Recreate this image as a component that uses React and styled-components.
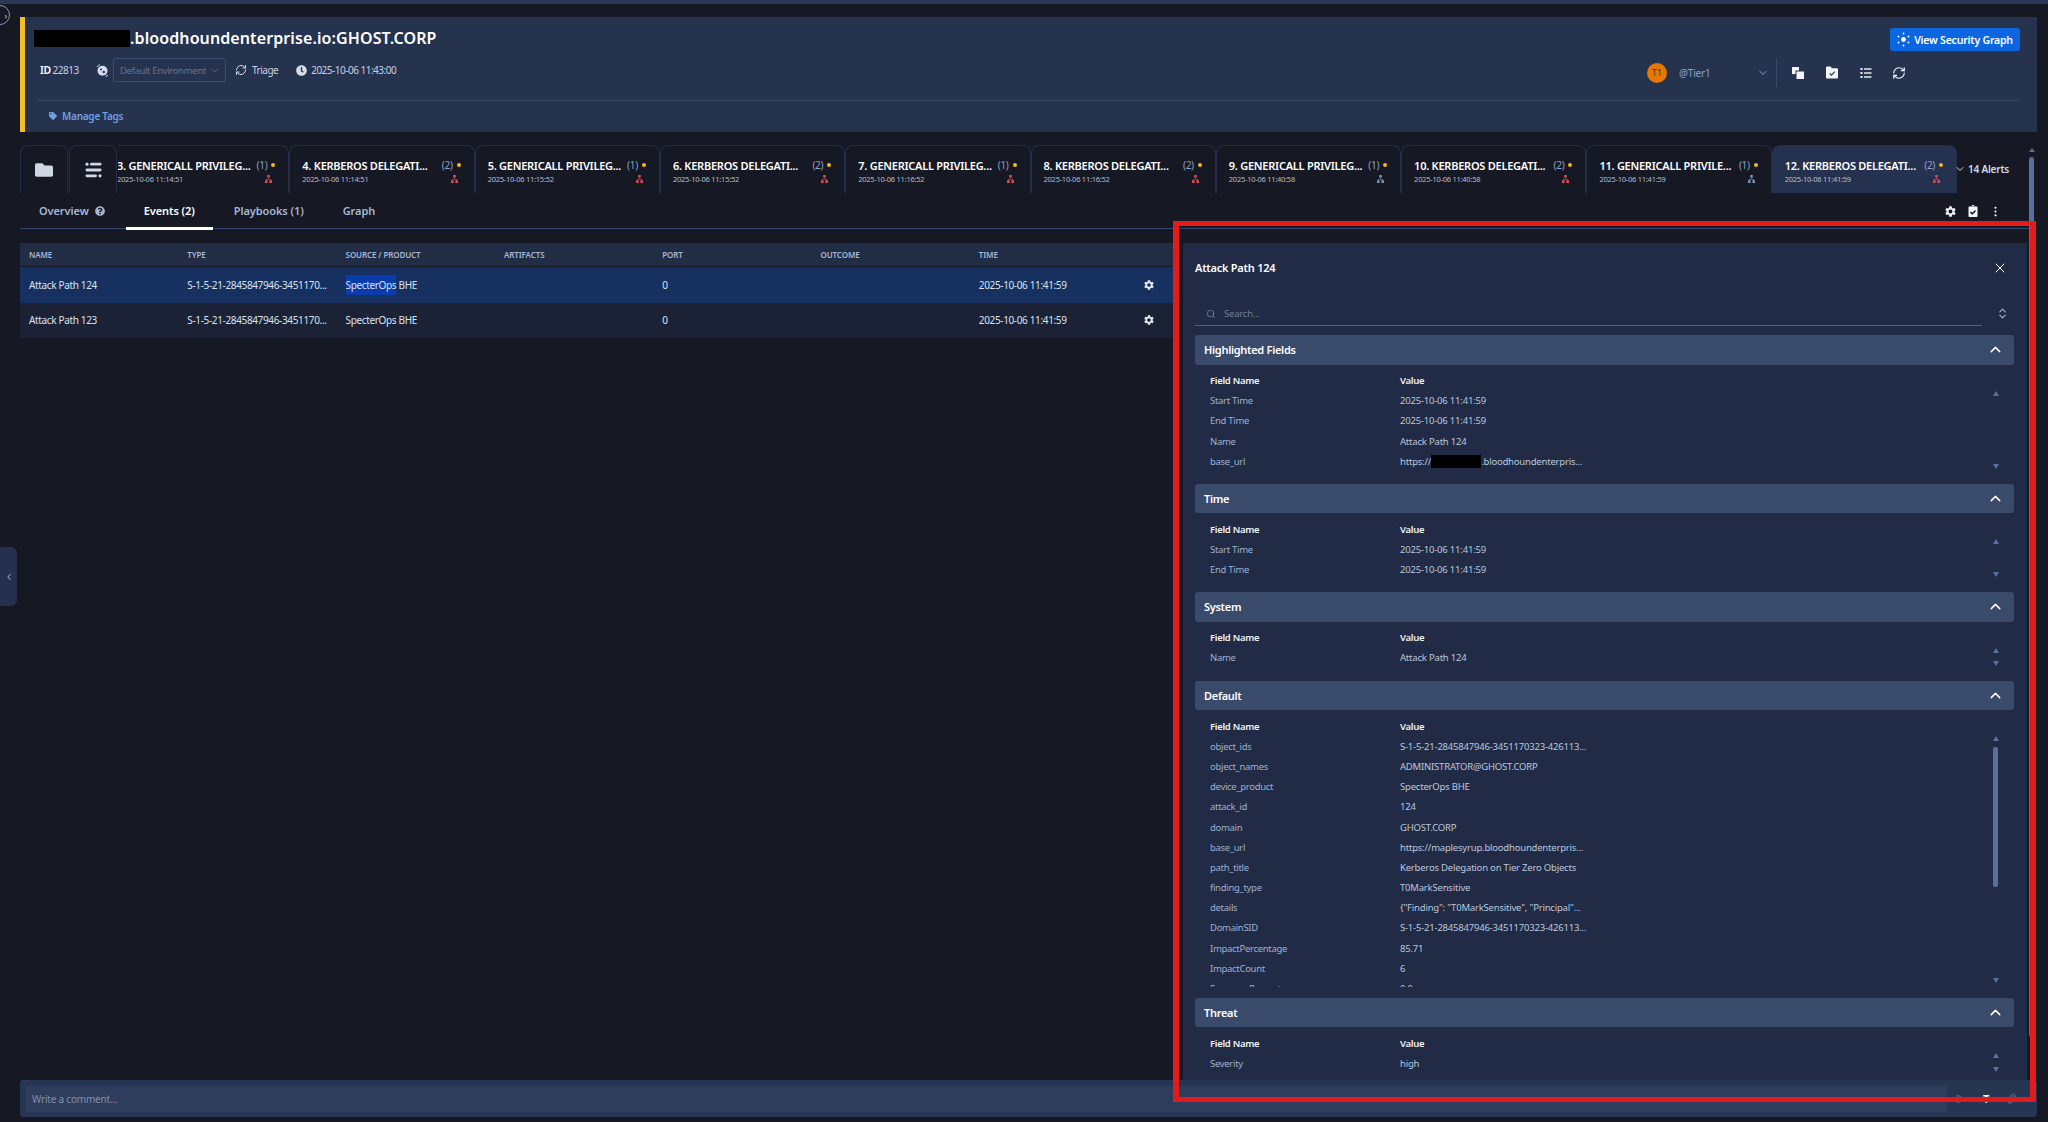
import React from 'react';
import styled, { createGlobalStyle } from 'styled-components';
import { ChevronDown, ChevronLeft, ChevronUp, ChevronsUpDown, RefreshCw, Search, X, EllipsisVertical, SendHorizontal, Paperclip } from 'lucide-react';
import { FaClock, FaTag, FaQuestionCircle, FaClipboardCheck, FaFolder } from 'react-icons/fa';
import { MdSettings } from 'react-icons/md';

const GlobalStyle = createGlobalStyle`
    html, body {
        margin: 0;
        padding: 0;
        height: 100%;
        background: #161824;
        overflow: hidden;
    }
    * {
        box-sizing: border-box;
    }
    body {
        font-family: "Noto Sans", "Open Sans", sans-serif;
        color: #d5dded;
    }
`;

const Page = styled.div`
    position: relative;
    width: 2048px;
    height: 1122px;
    display: flex;
    flex-direction: column;
    overflow: hidden;
`;

const TopStrip = styled.div`
    height: 4px;
    flex: none;
    background: #2a3855;
`;

const CollapseBadge = styled.div`
    position: absolute;
    left: -10px;
    top: 5px;
    width: 20px;
    height: 20px;
    border-radius: 50%;
    border: 1px solid #8d9bb8;
    background: #161824;
    color: #d5dded;
    display: flex;
    align-items: center;
    justify-content: flex-end;
    font-size: 8px;
    padding-right: 2px;
`;

const SideHandle = styled.div`
    position: absolute;
    left: 0;
    top: 547px;
    width: 17px;
    height: 59px;
    background: #24304d;
    border-radius: 0 6px 6px 0;
    color: #d5dded;
    display: flex;
    align-items: center;
    justify-content: center;
`;

const PageScrollArrow = styled.div`
    position: absolute;
    left: 2029px;
    top: 148px;
    width: 0;
    height: 0;
    border-left: 3px solid transparent;
    border-right: 3px solid transparent;
    border-bottom: 4px solid #5b6f9e;
`;

const PageScrollThumb = styled.div`
    position: absolute;
    left: 2029px;
    top: 157px;
    width: 5px;
    height: 880px;
    border-radius: 3px;
    background: #5b6f9e;
`;

const RedFrame = styled.div`
    position: absolute;
    left: 1173px;
    top: 221px;
    width: 863px;
    height: 881px;
    border: solid #e21c1c;
    border-width: 5px 6px;
    pointer-events: none;
`;

const Header = styled.header`
    flex: none;
    height: 115px;
    margin: 13px 11px 0 20px;
    background: #26334f;
    border-left: 5px solid #f5bd2a;
`;

const HeaderMain = styled.div`
    height: 84px;
    margin: 0 17px 0 12px;
    border-bottom: 1px solid #36445f;
    display: flex;
    justify-content: space-between;
`;

const HeaderLeft = styled.div`
    display: flex;
    flex-direction: column;
`;

const Title = styled.h1`
    margin: 11px 0 0 -3px;
    height: 21px;
    display: flex;
    align-items: center;
    font-size: 16px;
    line-height: 21px;
    font-weight: 600;
    color: #fff;
    letter-spacing: 0.1px;
`;

const Redacted = styled.span`
    display: inline-block;
    flex: none;
    width: ${(p) => p.$width}px;
    height: ${(p) => p.$height}px;
    background: #000;
`;

const MetaRow = styled.div`
    margin: 9px 0 0 3px;
    height: 24px;
    display: flex;
    align-items: center;
    font-size: 10px;
    color: #c6d0e2;
    white-space: nowrap;
`;

const MetaId = styled.span`
    width: 56px;
    letter-spacing: -0.5px;
    b {
        font-size: 10.5px;
        font-weight: 600;
        color: #fff;
        margin-right: 2px;
    }
`;

const MetaIcon = styled.span`
    width: ${(p) => p.$width || 13}px;
    flex: none;
    display: flex;
    align-items: center;
    color: #d5dded;
`;

const EnvSelect = styled.div`
    width: 113px;
    height: 24px;
    border: 1px solid #3d4d70;
    border-radius: 2px;
    padding: 0 5px 0 6px;
    display: flex;
    align-items: center;
    justify-content: space-between;
    color: #64738f;
    font-size: 9.5px;
    letter-spacing: -0.35px;
    margin-right: 9px;
`;

const MetaText = styled.span`
    letter-spacing: -0.5px;
    margin-right: ${(p) => p.$gap || 0}px;
`;

const HeaderRight = styled.div`
    display: flex;
    flex-direction: column;
    align-items: flex-end;
`;

const GraphButton = styled.button`
    margin-top: 11px;
    width: 130px;
    height: 23px;
    border: 0;
    border-radius: 3px;
    background: #0b66e0;
    color: #fff;
    font-family: inherit;
    font-size: 10.5px;
    font-weight: 600;
    letter-spacing: -0.2px;
    display: flex;
    align-items: center;
    justify-content: center;
    gap: 4px;
    padding: 0;
`;

const ActionRow = styled.div`
    margin: 7px 113px 0 0;
    height: 29px;
    display: flex;
    align-items: center;
`;

const Avatar = styled.div`
    width: 20px;
    height: 20px;
    border-radius: 50%;
    background: #e67700;
    color: #5a3300;
    font-size: 9px;
    display: flex;
    align-items: center;
    justify-content: center;
    margin-right: 12px;
`;

const Assignee = styled.div`
    width: 90px;
    margin-right: 7px;
    display: flex;
    align-items: center;
    justify-content: space-between;
    font-size: 10px;
    letter-spacing: -0.2px;
    color: #8fa3c6;
`;

const ActionDivider = styled.div`
    width: 1px;
    height: 29px;
    background: #3a4966;
    margin-right: 13px;
`;

const ActionIcon = styled.span`
    width: 16px;
    height: 16px;
    display: flex;
    align-items: center;
    justify-content: center;
    color: #f3f5f9;
    margin-left: ${(p) => p.$gap || 0}px;
`;

const ManageTags = styled.div`
    height: 30px;
    padding-left: 24px;
    display: flex;
    align-items: center;
    gap: 5px;
    font-size: 10px;
    font-weight: 600;
    letter-spacing: -0.25px;
    color: #6f9fe0;
`;

const TabRow = styled.div`
    flex: none;
    height: 48px;
    margin: 13px 0 0 20px;
    display: flex;
`;

const IconTab = styled.div`
    width: 48px;
    flex: none;
    margin-right: 1px;
    border: 1px solid #232e4a;
    border-bottom: 0;
    border-radius: 8px 8px 0 0;
    color: #cfd6e4;
    display: flex;
    align-items: center;
    justify-content: center;
`;

const TabScroller = styled.div`
    width: 1839px;
    flex: none;
    display: flex;
    justify-content: flex-end;
    overflow: hidden;
`;

const AlertTab = styled.div`
    width: 185.3px;
    flex: none;
    padding: 12px 13px 0 12px;
    border: 1px solid #232e4a;
    border-bottom: 0;
    border-radius: 8px 8px 0 0;
    background: ${(p) => (p.$active ? '#24314f' : 'transparent')};
`;

const TabLine = styled.div`
    height: 14px;
    display: flex;
    align-items: center;
`;

const TabTitle = styled.span`
    flex: 1;
    white-space: nowrap;
    font-size: 11px;
    font-weight: 600;
    letter-spacing: -0.25px;
    color: #fff;
`;

const TabCount = styled.span`
    font-size: 10px;
    letter-spacing: -0.3px;
    color: #8fa3c6;
    margin-right: 4px;
`;

const Dot = styled.span`
    width: 4px;
    height: 4px;
    border-radius: 50%;
    background: #f6b90e;
`;

const TabDate = styled.span`
    flex: 1;
    font-size: 7.5px;
    letter-spacing: -0.25px;
    color: #b4bfd3;
    white-space: nowrap;
`;

const TabSeverity = styled.span`
    display: flex;
    margin-right: 3px;
    color: ${(p) => (p.$tone === 'red' ? '#df4a50' : '#7c92b5')};
`;

const AlertsTotal = styled.div`
    display: flex;
    align-items: center;
    gap: 2px;
    margin-left: -3px;
    margin-top: 16px;
    height: 16px;
    font-size: 10px;
    font-weight: 600;
    letter-spacing: -0.2px;
    color: #d5dded;
    white-space: nowrap;
`;

const MainTabs = styled.nav`
    flex: none;
    height: 36px;
    margin: 0 11px 0 20px;
    padding-left: 1px;
    border-bottom: 1px solid #35456b;
    display: flex;
    align-items: flex-start;
    gap: 3px;
`;

const MainTab = styled.div`
    height: 37px;
    padding: 9px 18px 0;
    font-size: 11px;
    line-height: 18px;
    font-weight: 600;
    letter-spacing: -0.08px;
    color: ${(p) => (p.$active ? '#fff' : '#a7b7d3')};
    border-bottom: 3px solid ${(p) => (p.$active ? '#fff' : 'transparent')};
    display: flex;
    gap: 6px;
`;

const HelpIcon = styled.span`
    display: flex;
    align-items: center;
    height: 18px;
    color: #a7b7d3;
`;

const TabTools = styled.div`
    margin: 9px 0 0 auto;
    height: 18px;
    display: flex;
    align-items: center;
    gap: 10px;
    padding-right: 35px;
    color: #f3f5f9;
`;

const Body = styled.main`
    flex: 1;
    min-height: 0;
    display: flex;
    align-items: stretch;
    padding: 14px 0 0 20px;
`;

const EventsTable = styled.section`
    width: 1159px;
    flex: none;
`;

const Grid = styled.div`
    display: grid;
    grid-template-columns: repeat(6, 158.3px) 164px 1fr;
    align-items: center;
    padding-left: 9px;
`;

const TableHead = styled(Grid)`
    height: 23px;
    margin-bottom: 1px;
    background: #212c45;
    font-size: 8px;
    font-weight: 600;
    letter-spacing: -0.1px;
    color: #a7b7d3;
`;

const TableRow = styled(Grid)`
    height: 35.5px;
    font-size: 10px;
    letter-spacing: -0.35px;
    color: #dbe2ef;
    background: ${(p) => (p.$selected ? '#163160' : '#1b2236')};
`;

const Selected = styled.span`
    display: inline-block;
    height: 20px;
    line-height: 20px;
    background: #0a3cab;
`;

const RowGear = styled.span`
    display: flex;
    color: #e4e9f2;
`;

const DetailPanel = styled.aside`
    width: 844px;
    flex: none;
    margin-left: 4px;
    padding: 0 13px 0 12px;
    background: #212b45;
    overflow: hidden;
`;

const PanelTitleRow = styled.div`
    height: 49px;
    margin-bottom: 1px;
    display: flex;
    align-items: center;
    justify-content: space-between;
    padding-right: 6px;
    font-size: 11px;
    font-weight: 600;
    letter-spacing: -0.25px;
    color: #fff;
`;

const SearchRow = styled.div`
    height: 33px;
    margin-bottom: 9px;
    display: flex;
    align-items: flex-end;
    justify-content: space-between;
`;

const SearchBox = styled.div`
    width: 787px;
    height: 26px;
    border-bottom: 1px solid #50628a;
    padding: 2px 0 0 11px;
    display: flex;
    align-items: center;
    gap: 8px;
    font-size: 9.5px;
    letter-spacing: -0.2px;
    color: #6e7f9e;
`;

const SortToggle = styled.span`
    display: flex;
    height: 26px;
    align-items: center;
    margin-right: 5px;
    color: #a7b7d3;
`;

const SectionBar = styled.div`
    height: 29.5px;
    padding: 0 10px 0 9px;
    border-radius: 3px;
    background: #3a4a6b;
    color: #fff;
    display: flex;
    align-items: center;
    justify-content: space-between;
    font-size: 11px;
    font-weight: 600;
    letter-spacing: -0.3px;
`;

const SectionBody = styled.div`
    display: flex;
    height: ${(p) => p.$height}px;
    padding: 6px 0 11px 15px;
`;

const FieldRows = styled.div`
    flex: 1;
    min-width: 0;
    overflow: hidden;
`;

const FieldRow = styled.div`
    height: 20.2px;
    display: grid;
    grid-template-columns: 190px 1fr;
    align-items: center;
    font-size: 9.5px;
    letter-spacing: -0.3px;
    color: #9fb0cf;
    white-space: nowrap;
`;

const HeadRow = styled(FieldRow)`
    font-weight: 600;
    color: #eef2f8;
`;

const FieldValue = styled.span`
    display: flex;
    align-items: center;
    letter-spacing: -0.2px;
    color: #bcc8df;
`;

const ScrollTrack = styled.div`
    width: 5px;
    margin: 20px 16px 4px 0;
    display: flex;
    flex-direction: column;
    align-items: center;
    justify-content: space-between;
`;

const ScrollUp = styled.i`
    border-left: 3px solid transparent;
    border-right: 3px solid transparent;
    border-bottom: 5px solid #5b6f9e;
`;

const ScrollDown = styled.i`
    border-left: 3px solid transparent;
    border-right: 3px solid transparent;
    border-top: 5px solid #5b6f9e;
`;

const ScrollThumb = styled.i`
    width: 5px;
    height: 140px;
    margin-bottom: auto;
    margin-top: 6px;
    border-radius: 2px;
    background: #5b6f9e;
`;

const CommentBar = styled.footer`
    position: relative;
    flex: none;
    height: 37px;
    margin: 0 11px 5px 20px;
    padding: 5px 0 5px 6px;
    background: #263552;
    border-radius: 3px;
    display: flex;
    align-items: center;
`;

const CommentInput = styled.div`
    width: 1921px;
    height: 26px;
    padding-left: 6px;
    background: #2f3d5c;
    display: flex;
    align-items: center;
    font-size: 10px;
    letter-spacing: -0.2px;
    color: #8090ad;
`;

const CommentTools = styled.div`
    flex: 1;
    display: flex;
    align-items: center;
    gap: 17px;
    padding-left: 9px;
    color: #6c7d9c;
`;

const ToolLetter = styled.span`
    font-size: 11px;
    font-weight: 700;
    color: #f3f5f9;
`;

const tabs = [
    { title: '3. GENERICALL PRIVILEG...', count: 1, date: '2025-10-06 11:14:51', tone: 'red' },
    { title: '4. KERBEROS DELEGATI...', count: 2, date: '2025-10-06 11:14:51', tone: 'red' },
    { title: '5. GENERICALL PRIVILEG...', count: 1, date: '2025-10-06 11:15:52', tone: 'red' },
    { title: '6. KERBEROS DELEGATI...', count: 2, date: '2025-10-06 11:15:52', tone: 'red' },
    { title: '7. GENERICALL PRIVILEG...', count: 1, date: '2025-10-06 11:16:52', tone: 'red' },
    { title: '8. KERBEROS DELEGATI...', count: 2, date: '2025-10-06 11:16:52', tone: 'red' },
    { title: '9. GENERICALL PRIVILEG...', count: 1, date: '2025-10-06 11:40:58', tone: 'blue' },
    { title: '10. KERBEROS DELEGATI...', count: 2, date: '2025-10-06 11:40:58', tone: 'red' },
    { title: '11. GENERICALL PRIVILE...', count: 1, date: '2025-10-06 11:41:59', tone: 'blue' },
    { title: '12. KERBEROS DELEGATI...', count: 2, date: '2025-10-06 11:41:59', tone: 'red', active: true },
];

const events = [
    { name: 'Attack Path 124', selected: true },
    { name: 'Attack Path 123' },
];

const columns = ['NAME', 'TYPE', 'SOURCE / PRODUCT', 'ARTIFACTS', 'PORT', 'OUTCOME', 'TIME'];

const sections = [
    {
        title: 'Highlighted Fields',
        height: 119,
        rows: [
            ['Start Time', '2025-10-06 11:41:59'],
            ['End Time', '2025-10-06 11:41:59'],
            ['Name', 'Attack Path 124'],
            ['base_url', 'redacted'],
        ],
    },
    {
        title: 'Time',
        height: 79,
        rows: [
            ['Start Time', '2025-10-06 11:41:59'],
            ['End Time', '2025-10-06 11:41:59'],
        ],
    },
    {
        title: 'System',
        height: 59,
        rows: [['Name', 'Attack Path 124']],
    },
    {
        title: 'Default',
        height: 287.5,
        thumb: true,
        rows: [
            ['object_ids', 'S-1-5-21-2845847946-3451170323-426113...'],
            ['object_names', 'ADMINISTRATOR@GHOST.CORP'],
            ['device_product', 'SpecterOps BHE'],
            ['attack_id', '124'],
            ['domain', 'GHOST.CORP'],
            ['base_url', 'https://maplesyrup.bloodhoundenterpris...'],
            ['path_title', 'Kerberos Delegation on Tier Zero Objects'],
            ['finding_type', 'T0MarkSensitive'],
            ['details', '{"Finding": "T0MarkSensitive", "Principal"...'],
            ['DomainSID', 'S-1-5-21-2845847946-3451170323-426113...'],
            ['ImpactPercentage', '85.71'],
            ['ImpactCount', '6'],
            ['ExposurePercent', '0.0'],
        ],
    },
    {
        title: 'Threat',
        height: 60,
        rows: [['Severity', 'high']],
    },
];

function EnvIcon() {
    return (
        <svg width="13" height="13" viewBox="0 0 13 13" fill="currentColor">
            <circle cx="6.5" cy="6.8" r="5" />
            <circle cx="5" cy="5.6" r="1" fill="#26334f" />
            <circle cx="7.8" cy="8" r="1.2" fill="#26334f" />
            <path d="M1 3 A6.5 6.5 0 0 1 4 0.6 M12 11 A6.5 6.5 0 0 1 9.5 12.6" stroke="currentColor" fill="none" />
        </svg>
    );
}

function ClusterIcon() {
    return (
        <svg width="13" height="15" viewBox="0 0 13 15" fill="#fff">
            <circle cx="6.5" cy="7.5" r="2.4" />
            <circle cx="6.5" cy="1.5" r="0.9" />
            <circle cx="6.5" cy="13.5" r="0.9" />
            <circle cx="1.5" cy="4.5" r="0.9" />
            <circle cx="11.5" cy="4.5" r="0.9" />
            <circle cx="1.5" cy="10.5" r="0.9" />
            <circle cx="11.5" cy="10.5" r="0.9" />
        </svg>
    );
}

function CopyIcon() {
    return (
        <svg width="14" height="14" viewBox="0 0 14 14" fill="currentColor">
            <path d="M1 1.5 A0.5 0.5 0 0 1 1.5 1 H8 V4.5 H4.5 V8 H1 Z" />
            <path d="M5.5 5.5 H13 V13 H5.5 Z" />
        </svg>
    );
}

function FolderCheckIcon() {
    return (
        <svg width="14" height="13" viewBox="0 0 14 13">
            <path d="M1 1.5 A1 1 0 0 1 2 0.5 H5.5 L7 2.2 H12 A1 1 0 0 1 13 3.2 V11.5 A1 1 0 0 1 12 12.5 H2 A1 1 0 0 1 1 11.5 Z" fill="currentColor" />
            <path d="M4.6 7.4 L6.4 9.2 L9.8 5.6" stroke="#26334f" strokeWidth="1.2" fill="none" />
        </svg>
    );
}

function DotListIcon() {
    return (
        <svg width="12" height="12" viewBox="0 0 12 12" fill="currentColor">
            <rect x="0.5" y="1" width="2" height="2" />
            <rect x="4" y="1.3" width="7.5" height="1.4" />
            <rect x="0.5" y="5" width="2" height="2" />
            <rect x="4" y="5.3" width="7.5" height="1.4" />
            <rect x="0.5" y="9" width="2" height="2" />
            <rect x="4" y="9.3" width="7.5" height="1.4" />
        </svg>
    );
}

function QueueIcon() {
    return (
        <svg width="17" height="16" viewBox="0 0 17 16" fill="currentColor">
            <circle cx="2" cy="2.2" r="1.6" />
            <rect x="5" y="0.8" width="11.5" height="2.8" rx="1.4" />
            <rect x="0.5" y="6.6" width="16" height="2.8" rx="1.4" />
            <rect x="0.5" y="12.4" width="11.5" height="2.8" rx="1.4" />
            <circle cx="15" cy="13.8" r="1.6" />
        </svg>
    );
}

function HierarchyIcon() {
    return (
        <svg width="7" height="8" viewBox="0 0 7 8" fill="currentColor">
            <rect x="2.2" y="0" width="2.6" height="2.6" />
            <rect x="0" y="5.2" width="2.6" height="2.8" />
            <rect x="4.4" y="5.2" width="2.6" height="2.8" />
            <path d="M3.2 2.6 H3.8 V3.9 H6 V5.2 H5.4 V4.5 H1.6 V5.2 H1 V3.9 H3.2 Z" />
        </svg>
    );
}

function AlertTabItem({ tab }) {
    return (
        <AlertTab $active={tab.active}>
            <TabLine>
                <TabTitle>{tab.title}</TabTitle>
                <TabCount>({tab.count})</TabCount>
                <Dot />
            </TabLine>
            <TabLine>
                <TabDate>{tab.date}</TabDate>
                <TabSeverity $tone={tab.tone}>
                    <HierarchyIcon />
                </TabSeverity>
            </TabLine>
        </AlertTab>
    );
}

function FieldSection({ section }) {
    return (
        <div>
            <SectionBar>
                {section.title}
                <ChevronUp size={17} strokeWidth={2} />
            </SectionBar>
            <SectionBody $height={section.height}>
                <FieldRows>
                    <HeadRow>
                        <span>Field Name</span>
                        <span>Value</span>
                    </HeadRow>
                    {section.rows.map(([label, value], i) => (
                        <FieldRow key={i}>
                            <span>{label}</span>
                            {value === 'redacted' ? (
                                <FieldValue>
                                    https://
                                    <Redacted $width={50} $height={13} />
                                    .bloodhoundenterpris...
                                </FieldValue>
                            ) : (
                                <FieldValue>{value}</FieldValue>
                            )}
                        </FieldRow>
                    ))}
                </FieldRows>
                <ScrollTrack>
                    <ScrollUp />
                    {section.thumb && <ScrollThumb />}
                    <ScrollDown />
                </ScrollTrack>
            </SectionBody>
        </div>
    );
}

function App() {
    return (
        <Page>
            <GlobalStyle />
            <TopStrip />

            <Header>
                <HeaderMain>
                    <HeaderLeft>
                        <Title>
                            <Redacted $width={96} $height={17} />
                            .bloodhoundenterprise.io:GHOST.CORP
                        </Title>
                        <MetaRow>
                            <MetaId><b>ID</b>22813</MetaId>
                            <MetaIcon $width={17}><EnvIcon /></MetaIcon>
                            <EnvSelect>
                                Default Environment
                                <ChevronDown size={11} />
                            </EnvSelect>
                            <MetaIcon $width={17}><RefreshCw size={12} /></MetaIcon>
                            <MetaText $gap={18}>Triage</MetaText>
                            <MetaIcon $width={15}><FaClock size={11} /></MetaIcon>
                            <MetaText>2025-10-06 11:43:00</MetaText>
                        </MetaRow>
                    </HeaderLeft>
                    <HeaderRight>
                        <GraphButton>
                            <ClusterIcon />
                            View Security Graph
                        </GraphButton>
                        <ActionRow>
                            <Avatar>T1</Avatar>
                            <Assignee>
                                @Tier1
                                <ChevronDown size={12} />
                            </Assignee>
                            <ActionDivider />
                            <ActionIcon><CopyIcon /></ActionIcon>
                            <ActionIcon $gap={18}><FolderCheckIcon /></ActionIcon>
                            <ActionIcon $gap={18}><DotListIcon /></ActionIcon>
                            <ActionIcon $gap={17}><RefreshCw size={14} /></ActionIcon>
                        </ActionRow>
                    </HeaderRight>
                </HeaderMain>
                <ManageTags>
                    <FaTag size={8} />
                    Manage Tags
                </ManageTags>
            </Header>

            <TabRow>
                <IconTab><FaFolder size={18} /></IconTab>
                <IconTab><QueueIcon /></IconTab>
                <TabScroller>
                    {tabs.map((tab) => (
                        <AlertTabItem key={tab.title} tab={tab} />
                    ))}
                </TabScroller>
                <AlertsTotal>
                    <ChevronDown size={12} />
                    14 Alerts
                </AlertsTotal>
            </TabRow>

            <MainTabs>
                <MainTab>
                    Overview
                    <HelpIcon><FaQuestionCircle size={10} /></HelpIcon>
                </MainTab>
                <MainTab $active>Events (2)</MainTab>
                <MainTab>Playbooks (1)</MainTab>
                <MainTab>Graph</MainTab>
                <TabTools>
                    <MdSettings size={13} />
                    <FaClipboardCheck size={12} />
                    <EllipsisVertical size={13} />
                </TabTools>
            </MainTabs>

            <Body>
                <EventsTable>
                    <TableHead>
                        {columns.map((c) => (
                            <span key={c}>{c}</span>
                        ))}
                    </TableHead>
                    {events.map((e) => (
                        <TableRow key={e.name} $selected={e.selected}>
                            <span>{e.name}</span>
                            <span>S-1-5-21-2845847946-3451170...</span>
                            <span>
                                {e.selected ? <Selected>SpecterOps</Selected> : 'SpecterOps'} BHE
                            </span>
                            <span />
                            <span>0</span>
                            <span />
                            <span>2025-10-06 11:41:59</span>
                            <RowGear><MdSettings size={12} /></RowGear>
                        </TableRow>
                    ))}
                </EventsTable>

                <DetailPanel>
                    <PanelTitleRow>
                        Attack Path 124
                        <X size={16} strokeWidth={1.5} />
                    </PanelTitleRow>
                    <SearchRow>
                        <SearchBox>
                            <Search size={10} />
                            Search...
                        </SearchBox>
                        <SortToggle><ChevronsUpDown size={13} /></SortToggle>
                    </SearchRow>
                    {sections.map((s) => (
                        <FieldSection key={s.title} section={s} />
                    ))}
                </DetailPanel>
            </Body>

            <CommentBar>
                <CommentInput>Write a comment...</CommentInput>
                <CommentTools>
                    <SendHorizontal size={10} />
                    <ToolLetter>T</ToolLetter>
                    <Paperclip size={11} />
                </CommentTools>
            </CommentBar>

            <CollapseBadge>›</CollapseBadge>
            <SideHandle><ChevronLeft size={10} /></SideHandle>
            <PageScrollArrow />
            <PageScrollThumb />
            <RedFrame />
        </Page>
    );
}

export default App;
